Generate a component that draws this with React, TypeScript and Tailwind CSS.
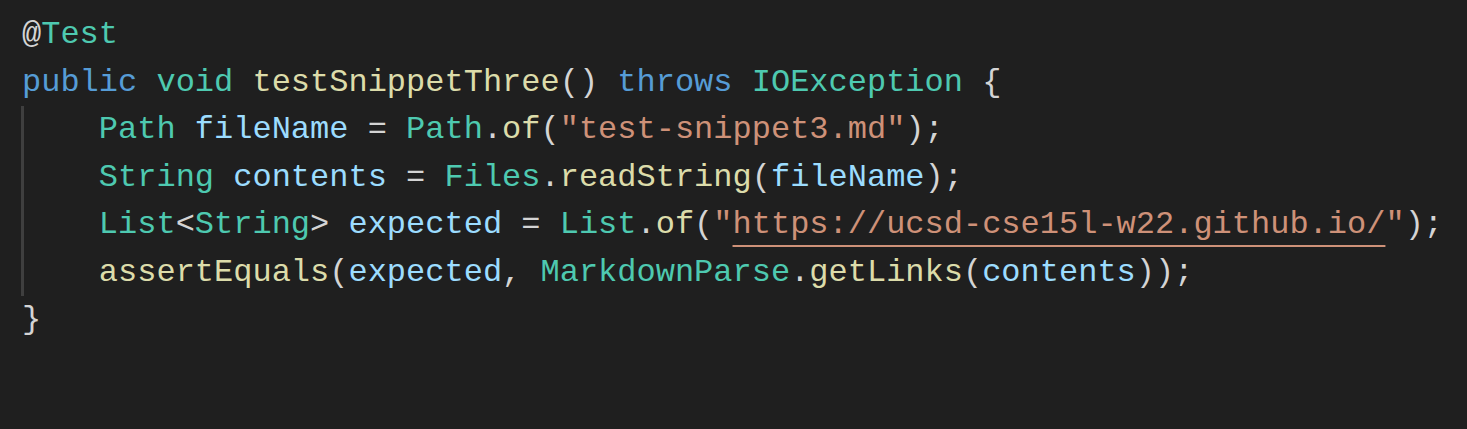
import React from 'react'

const T = ({ c, children }: { c: string; children: React.ReactNode }) => <span className={c}>{children}</span>

const type = 'text-[#4ec9b0]'
const kw = 'text-[#569cd6]'
const fn = 'text-[#dcdcaa]'
const vr = 'text-[#9cdcfe]'
const str = 'text-[#ce9178]'
const pn = 'text-[#d4d4d4]'

const Line = ({ indent, children }: { indent?: boolean; children: React.ReactNode }) => (
  <div className="h-[47.5px] whitespace-pre leading-[47.5px]">
    {indent && '    '}
    {children}
  </div>
)

const App = () => {
  return (
    <div
      className="h-[429px] w-full overflow-hidden bg-[#1f1f1f] pl-[22px] pt-[11px] text-[32px] text-[#d4d4d4]"
      style={{ fontFamily: '"Liberation Mono", "DejaVu Sans Mono", monospace' }}
    >
      <Line>
        <T c={pn}>@</T>
        <T c={type}>Test</T>
      </Line>
      <Line>
        <T c={kw}>public</T>{' '}<T c={type}>void</T>{' '}<T c={fn}>testSnippetThree</T>
        <T c={pn}>()</T>{' '}<T c={kw}>throws</T>{' '}<T c={type}>IOException</T>{' '}<T c={pn}>{'{'}</T>
      </Line>
      <div className="-ml-px border-l-[3px] border-[#3f3f3f]">
        <div className="-ml-[2px]">
          <Line indent>
            <T c={type}>Path</T>{' '}<T c={vr}>fileName</T>{' '}<T c={pn}>=</T>{' '}<T c={type}>Path</T>
            <T c={pn}>.</T>
            <T c={fn}>of</T>
            <T c={pn}>(</T>
            <T c={str}>"test-snippet3.md"</T>
            <T c={pn}>);</T>
          </Line>
          <Line indent>
            <T c={type}>String</T>{' '}<T c={vr}>contents</T>{' '}<T c={pn}>=</T>{' '}<T c={type}>Files</T>
            <T c={pn}>.</T>
            <T c={fn}>readString</T>
            <T c={pn}>(</T>
            <T c={vr}>fileName</T>
            <T c={pn}>);</T>
          </Line>
          <Line indent>
            <T c={type}>List</T>
            <T c={pn}>{'<'}</T>
            <T c={type}>String</T>
            <T c={pn}>{'>'}</T>{' '}<T c={vr}>expected</T>{' '}<T c={pn}>=</T>{' '}<T c={type}>List</T>
            <T c={pn}>.</T>
            <T c={fn}>of</T>
            <T c={pn}>(</T>
            <T c={str}>"</T>
            <span className="text-[#ce9178] underline decoration-2 underline-offset-[12px]">
              https://ucsd-cse15l-w22.github.io/
            </span>
            <T c={str}>"</T>
            <T c={pn}>);</T>
          </Line>
          <Line indent>
            <T c={fn}>assertEquals</T>
            <T c={pn}>(</T>
            <T c={vr}>expected</T>
            <T c={pn}>,</T>{' '}<T c={type}>MarkdownParse</T>
            <T c={pn}>.</T>
            <T c={fn}>getLinks</T>
            <T c={pn}>(</T>
            <T c={vr}>contents</T>
            <T c={pn}>));</T>
          </Line>
        </div>
      </div>
      <Line>
        <T c={pn}>{'}'}</T>
      </Line>
    </div>
  )
}

export default App
